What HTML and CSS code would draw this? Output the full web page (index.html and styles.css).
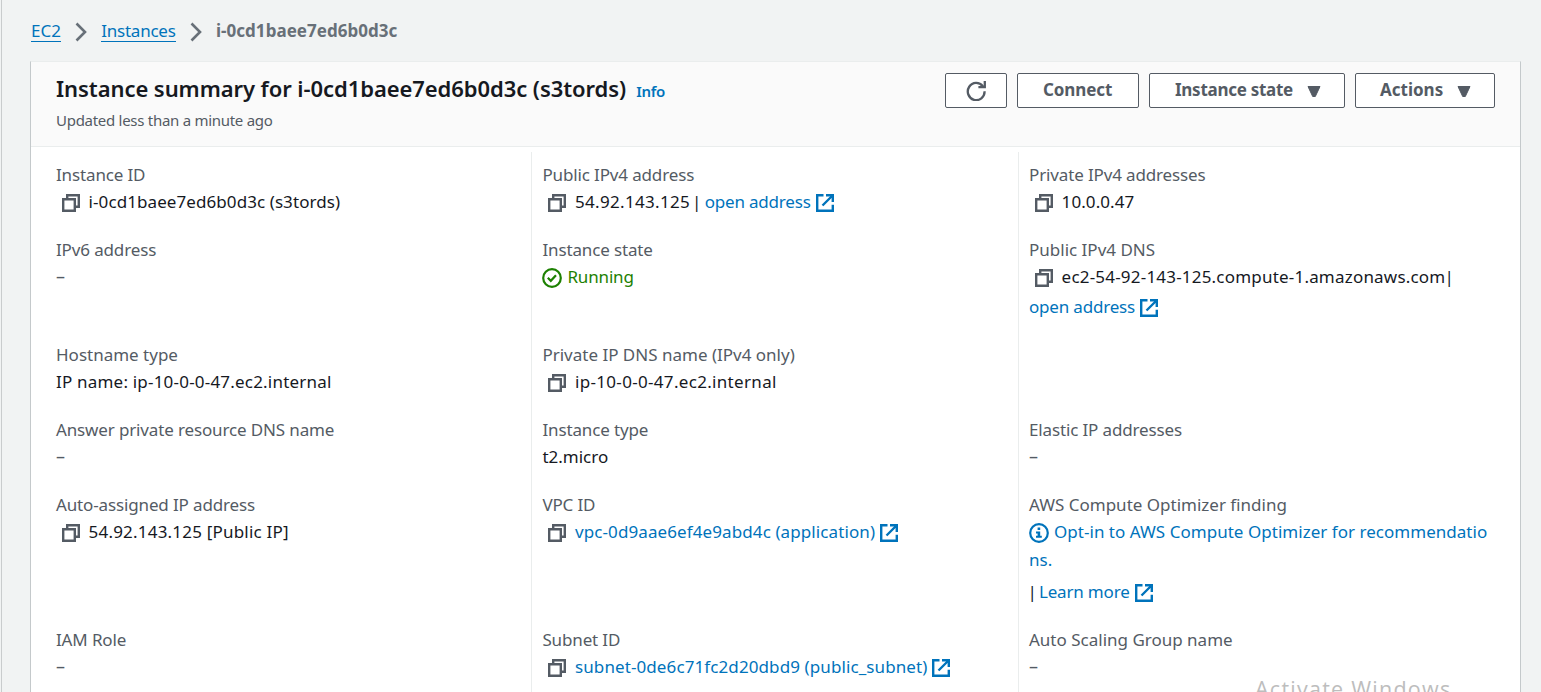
FILE: index.html
```html
<!DOCTYPE html>
<html lang="en">
<head>
<meta charset="utf-8">
<title>Instance summary</title>
<link rel="stylesheet" href="styles.css">
</head>
<body>
<svg width="0" height="0" class="sprite" aria-hidden="true">
  <symbol id="copy" viewBox="0 0 18 18"><path d="M1.2 5.2H12.8V16.8H1.2ZM5.2 5.2V1.2H16.8V12.8H12.8" fill="none" stroke="currentColor" stroke-width="2.4"/></symbol>
  <symbol id="external" viewBox="0 0 18 18"><path d="M7.5 1.2H1.2V16.8H16.8V10.8M16 2L6.5 11.5" fill="none" stroke="currentColor" stroke-width="2.4"/><path d="M10 0H18V8H15.6V4.2L13.8 2.4H10Z" fill="currentColor"/></symbol>
  <symbol id="chevron" viewBox="0 0 12 20"><path d="M1.5 1.5L10 10L1.5 18.5" fill="none" stroke="currentColor" stroke-width="2.6"/></symbol>
</svg>
<main class="page">
  <nav class="crumbs">
    <a class="crumb">EC2</a>
    <svg class="chevron"><use href="#chevron"/></svg>
    <a class="crumb crumb-instances">Instances</a>
    <svg class="chevron"><use href="#chevron"/></svg>
    <span class="current">i-0cd1baee7ed6b0d3c</span>
  </nav>
  <section class="card">
    <header class="card-header">
      <div class="heading">
        <h1 class="title">Instance summary for i-0cd1baee7ed6b0d3c (s3tords)<a class="info">Info</a></h1>
        <p class="updated">Updated less than a minute ago</p>
      </div>
      <div class="actions">
        <button class="btn btn-refresh" aria-label="Refresh"><svg class="refresh" viewBox="0 0 20 20"><path d="M18.6 10.2A8.4 8.6 0 1 1 16.8 5.2M18.8 0V6.2H12.4" fill="none" stroke="currentColor" stroke-width="2.3"/></svg></button>
        <button class="btn btn-connect">Connect</button>
        <button class="btn btn-state">Instance state<svg class="caret" viewBox="0 0 14 11"><path d="M1 .5H13L8.3 10.5H5.7Z" fill="currentColor" stroke="currentColor" stroke-linejoin="round"/></svg></button>
        <button class="btn btn-menu">Actions<svg class="caret" viewBox="0 0 14 11"><path d="M1 .5H13L8.3 10.5H5.7Z" fill="currentColor" stroke="currentColor" stroke-linejoin="round"/></svg></button>
      </div>
    </header>
    <div class="columns">
      <div class="column">
        <div class="field"><div class="label">Instance ID</div><div class="value"><svg class="copy"><use href="#copy"/></svg>i-0cd1baee7ed6b0d3c (s3tords)</div></div>
        <div class="field"><div class="label">IPv6 address</div><div class="value empty">–</div></div>
        <div class="field"><div class="label host-label">Hostname type</div><div class="value host">IP name: ip-10-0-0-47.ec2.internal</div></div>
        <div class="field"><div class="label">Answer private resource DNS name</div><div class="value empty">–</div></div>
        <div class="field"><div class="label">Auto-assigned IP address</div><div class="value host"><svg class="copy"><use href="#copy"/></svg>54.92.143.125 [Public IP]</div></div>
        <div class="field"><div class="label">IAM Role</div><div class="value empty">–</div></div>
      </div>
      <div class="column">
        <div class="field"><div class="label">Public IPv4 address</div><div class="value"><svg class="copy"><use href="#copy"/></svg><span class="ip">54.92.143.125</span><span class="bar">|</span><a class="link">open address</a><svg class="external"><use href="#external"/></svg></div></div>
        <div class="field"><div class="label">Instance state</div><div class="value running"><svg class="status" viewBox="0 0 20 20"><g fill="none" stroke="currentColor" stroke-width="2.2"><circle cx="10" cy="10" r="8.8"/><path d="M5.8 9.8L8.8 12.8L14 7.2"/></g></svg>Running</div></div>
        <div class="field"><div class="label wide">Private IP DNS name (IPv4 only)</div><div class="value ip"><svg class="copy"><use href="#copy"/></svg>ip-10-0-0-47.ec2.internal</div></div>
        <div class="field"><div class="label">Instance type</div><div class="value plain">t2.micro</div></div>
        <div class="field"><div class="label">VPC ID</div><div class="value"><svg class="copy"><use href="#copy"/></svg><a class="resource">vpc-0d9aae6ef4e9abd4c (application)</a><svg class="external"><use href="#external"/></svg></div></div>
        <div class="field"><div class="label">Subnet ID</div><div class="value"><svg class="copy"><use href="#copy"/></svg><a class="resource">subnet-0de6c71fc2d20dbd9 (public_subnet)</a><svg class="external"><use href="#external"/></svg></div></div>
      </div>
      <div class="column">
        <div class="field"><div class="label">Private IPv4 addresses</div><div class="value"><svg class="copy"><use href="#copy"/></svg>10.0.0.47</div></div>
        <div class="field"><div class="label wide">Public IPv4 DNS</div><div class="value host"><svg class="copy"><use href="#copy"/></svg>ec2-54-92-143-125.compute-1.amazonaws.com<span class="bar-tight">|</span></div><div class="value second"><a class="link">open address</a><svg class="external"><use href="#external"/></svg></div></div>
        <div class="field"></div>
        <div class="field"><div class="label">Elastic IP addresses</div><div class="value empty">–</div></div>
        <div class="field"><div class="label wide">AWS Compute Optimizer finding</div><div class="value optin"><svg class="status" viewBox="0 0 20 20"><circle cx="10" cy="10" r="8.8" fill="none" stroke="currentColor" stroke-width="2.2"/><path d="M8.6 4.6H11.2V7H8.6ZM7 8.4H11.2V12.8H12.8V14.8H7V12.8H8.6V10.4H7Z" fill="currentColor"/></svg>Opt-in to AWS Compute Optimizer for recommendatio</div><div class="value optin">ns.</div><div class="value learn"><span class="bar-first">|</span><a class="link">Learn more</a><svg class="external"><use href="#external"/></svg></div></div>
        <div class="field"><div class="label wide">Auto Scaling Group name</div><div class="value empty">–</div></div>
      </div>
    </div>
  </section>
  <div class="watermark">Activate Windows</div>
</main>
</body>
</html>
```
FILE: styles.css
```css
* { box-sizing: border-box; }
body {
  margin: 0;
  overflow: hidden;
  font: 17px/27px "Noto Sans", sans-serif;
  color: #16191f;
  background: #f1f3f3;
}
.sprite { position: absolute; }
.page {
  position: relative;
  height: 692px;
  margin-left: 1px;
  padding: 17px 20px 0 28px;
  border-left: 1px solid #c9cccd;
  overflow: hidden;
}
.crumbs { display: flex; align-items: center; height: 28px; margin-left: 1px; }
.crumb {
  line-height: 20px;
  border-bottom: 1px solid #0073bb;
  color: #0073bb;
}
.crumb-instances { letter-spacing: -.25px; }
.chevron { width: 12px; height: 20px; margin: 1px 14.2px 0; color: #687078; }
.current { margin-top: -1px; font-weight: 700; letter-spacing: .04px; color: #687078; }

.card {
  margin-top: 16px;
  height: 700px;
  background: #fff;
  border: 1px solid #c4c9cb;
  border-top-color: #eaeded;
}
.card-header {
  display: flex;
  justify-content: space-between;
  height: 85px;
  padding: 10px 25px 0;
  background: #fafafa;
  border-bottom: 1px solid #eaeded;
}
.title { margin: 0; font-size: 22px; line-height: 32px; font-weight: 600; letter-spacing: -.07px; }
.info { margin-left: 10px; font-size: 15px; letter-spacing: -.25px; color: #0073bb; }
.updated { margin: 2px 0 0; font-size: 15px; line-height: 22px; letter-spacing: -.28px; color: #545b64; }
.actions { display: flex; gap: 10px; padding-top: 1px; }
.btn {
  display: flex;
  align-items: center;
  height: 35px;
  padding: 0 0 2px 25px;
  font: 700 17px/27px "Noto Sans", sans-serif;
  white-space: nowrap;
  color: #545b64;
  background: #fff;
  border: 1px solid #545b64;
  border-radius: 2px;
}
.btn-refresh { width: 62px; padding: 1px 0 0 20px; }
.btn-connect { width: 122px; letter-spacing: -.1px; }
.btn-state { width: 196px; letter-spacing: -.27px; }
.btn-menu { width: 140px; padding-left: 24px; }
.refresh { width: 20px; height: 20px; flex: none; }
.caret { width: 14px; height: 11px; margin: 3px 0 0 14px; flex: none; }

.columns { display: grid; grid-template-columns: 500px 487px 502px; margin-top: 5px; height: 620px; }
.column {
  display: grid;
  grid-template-rows: 75px 105px 75px 75px 135px 75px;
  padding: 9px 0 0 10.4px;
  border-left: 1px solid #eaeded;
}
.column:first-child { padding-left: 25px; border-left: 0; }
.column:last-child { padding-left: 10px; }
.label { height: 27px; letter-spacing: -.14px; color: #545b64; }
.wide, .host-label { letter-spacing: 0; }
.value { display: flex; align-items: center; height: 27px; letter-spacing: .08px; white-space: pre; }
.ip { letter-spacing: .32px; }
.host { letter-spacing: .2px; }
.plain { letter-spacing: 0; }
.copy { width: 18px; height: 18px; margin: 2px 8.6px 0 6px; color: #545b64; flex: none; }
.external { width: 18px; height: 18px; margin: 2px 0 0 5px; color: #0073bb; flex: none; }
.status { width: 20px; height: 20px; margin: 2px 5px 0 0; flex: none; }
.running { color: #1d8102; letter-spacing: -.15px; }
.link { letter-spacing: -.19px; color: #0073bb; }
.resource { letter-spacing: .1px; color: #0073bb; }
.bar { width: 14.6px; padding-left: 2px; }
.bar-tight { margin-left: -1px; }
.bar-first { width: 10px; margin-left: -1.5px; margin-right: 1.5px; }
.second { margin-top: 3px; }
.optin { height: 28px; letter-spacing: .03px; color: #0073bb; }
.optin:nth-child(2) { height: 27px; }
.learn { margin-top: 5px; }
.empty { font-size: 18px; color: #545b64; }
.watermark {
  position: absolute;
  left: 1253px;
  top: 674px;
  font: 21.5px/29px "Open Sans", sans-serif;
  letter-spacing: 1.25px;
  color: #bdbdbd;
  white-space: nowrap;
}
```
